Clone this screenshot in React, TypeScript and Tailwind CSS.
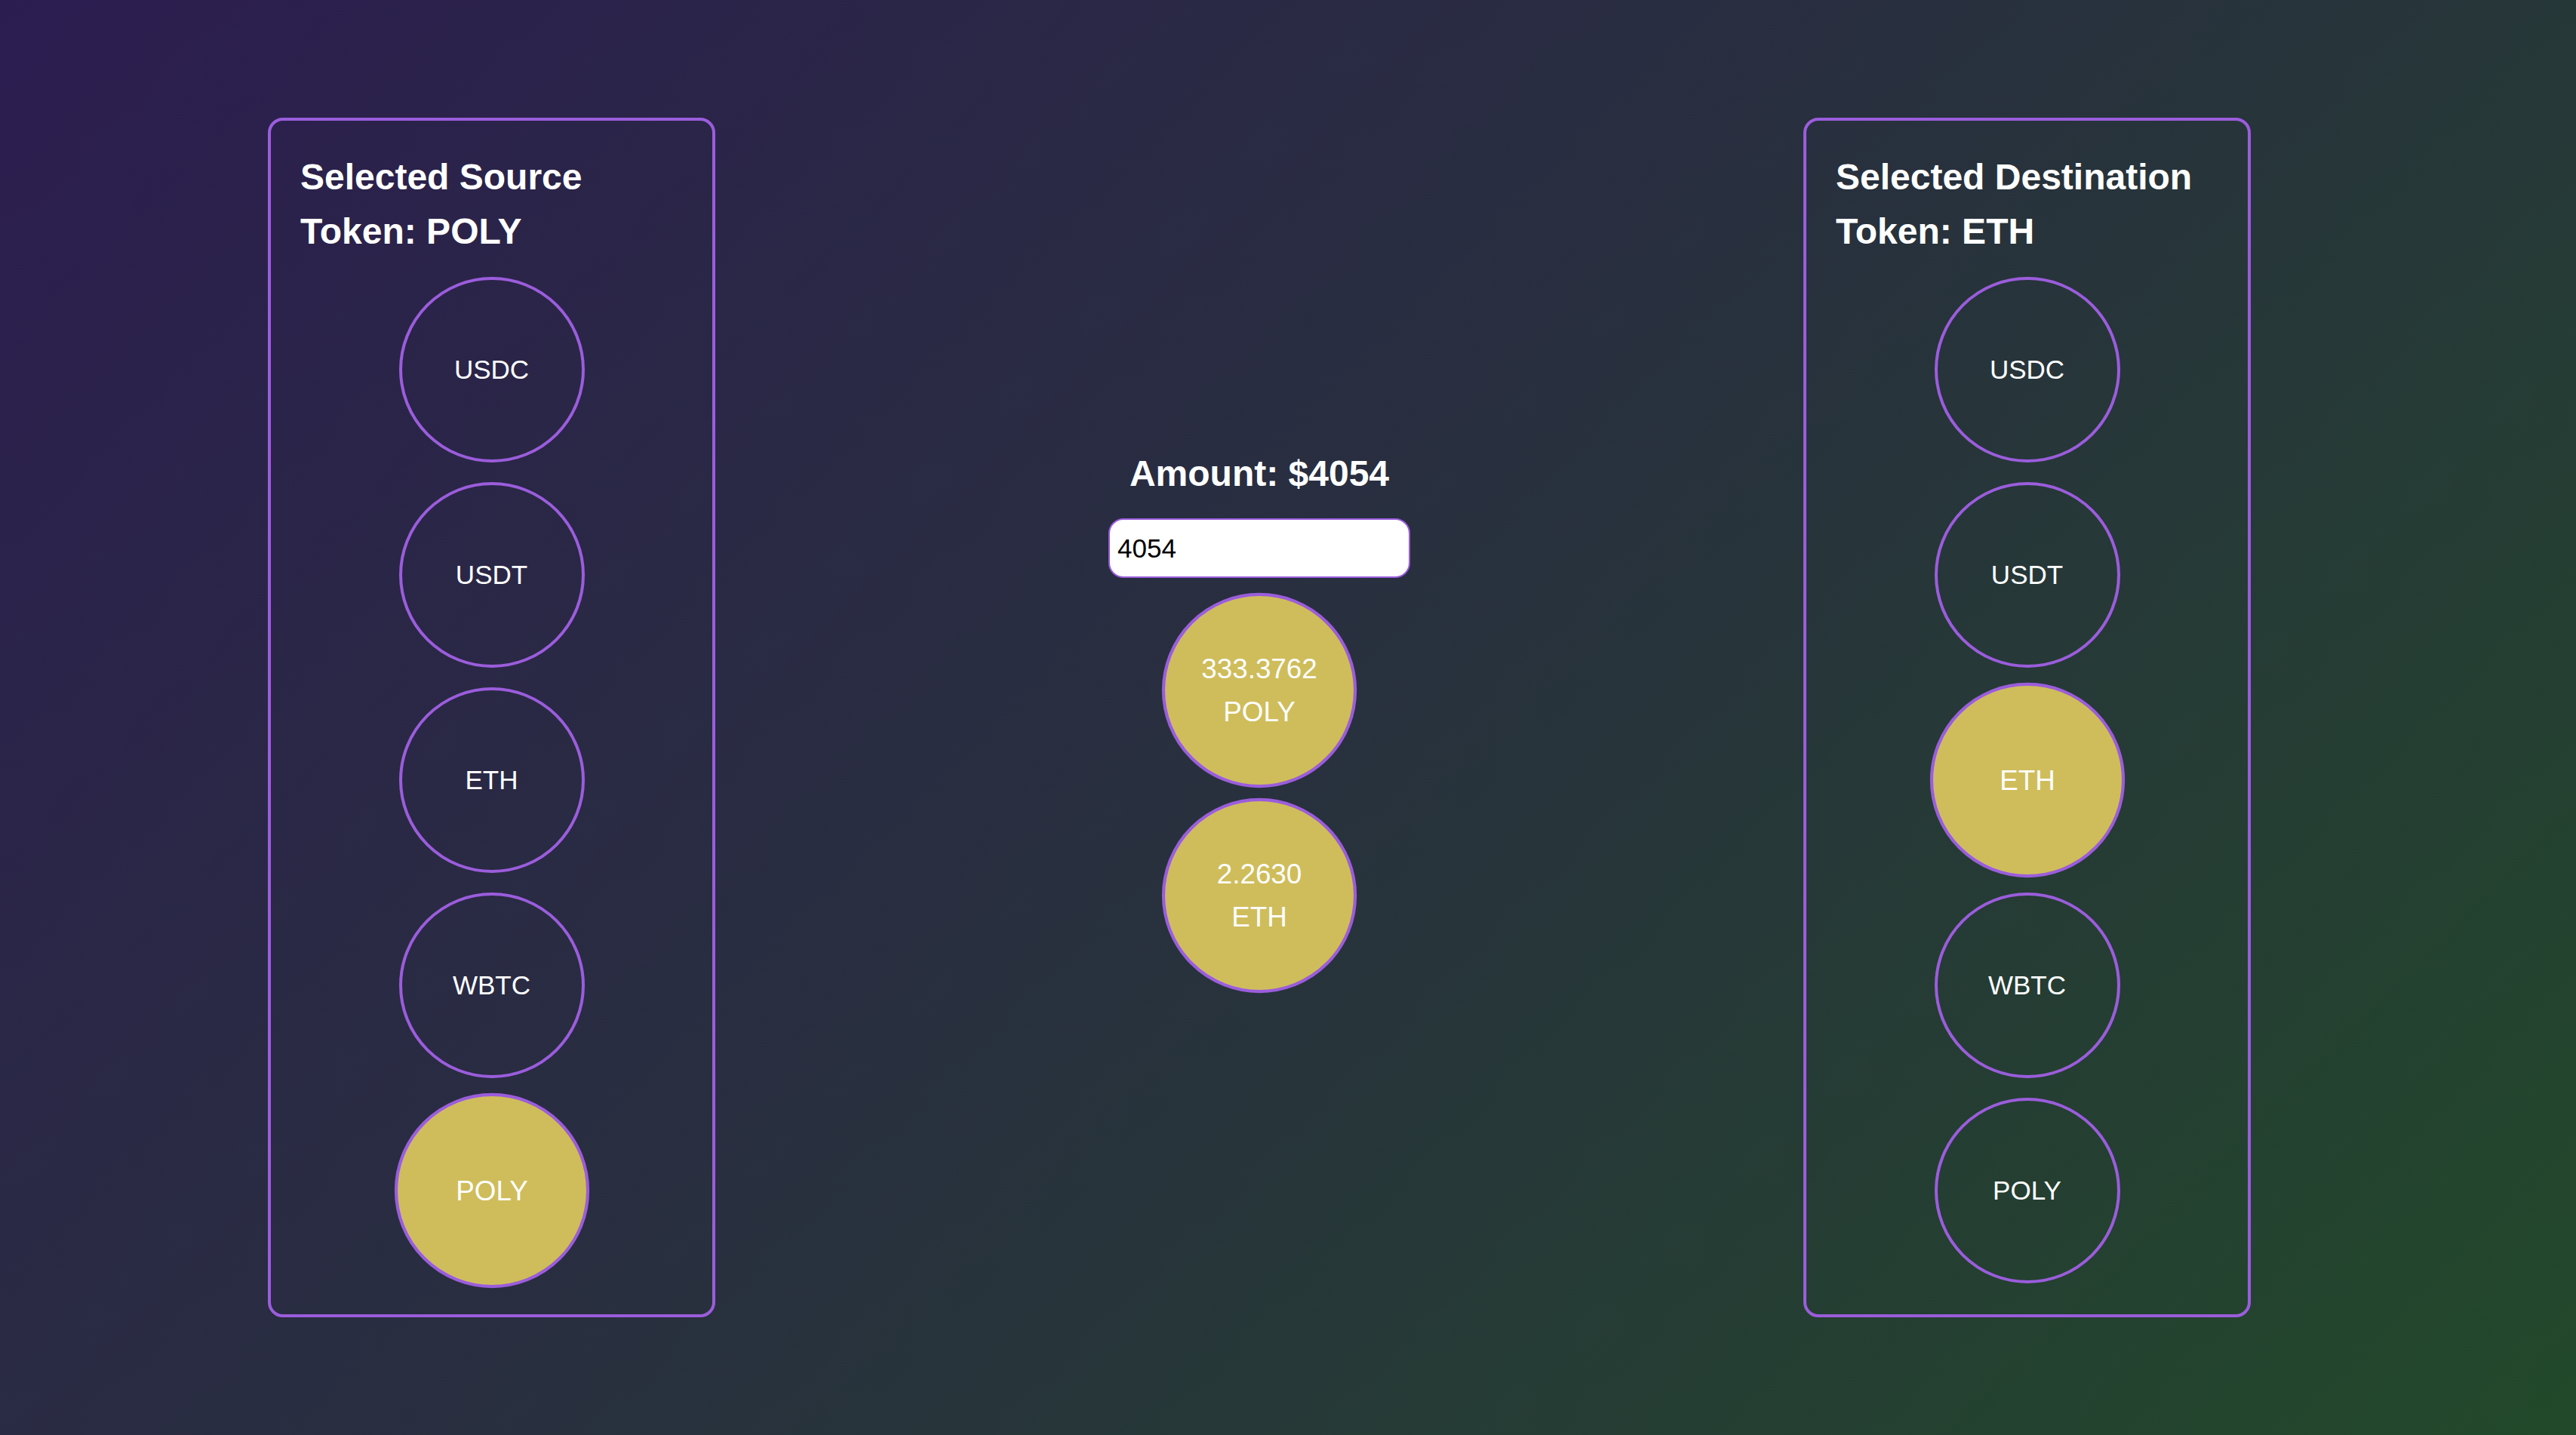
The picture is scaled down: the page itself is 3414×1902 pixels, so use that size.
import React from "react";

const tokens = ["USDC", "USDT", "ETH", "WBTC", "POLY"];

function TokenCircle({ label, selected }: { label: string; selected: boolean }) {
  return (
    <div
      className={
        "flex h-[246px] w-[246px] shrink-0 items-center justify-center rounded-full border-4 border-[#9b5ddc] text-[35px] leading-[54px] text-white " +
        (selected ? "scale-[1.05] bg-[#cfbd5c]" : "bg-transparent")
      }
    >
      {label}
    </div>
  );
}

function Panel({ title, selected }: { title: string; selected: string }) {
  return (
    <div className="flex w-[593px] shrink-0 flex-col items-center rounded-[20px] border-4 border-[#9b5ddc] px-[39px] pt-[39px] pb-[41px]">
      <h2 className="mb-[24px] w-full text-left text-[48px] font-bold leading-[72px] text-white">
        {title}
      </h2>
      <div className="flex flex-col items-center gap-[26px]">
        {tokens.map((t) => (
          <TokenCircle key={t} label={t} selected={t === selected} />
        ))}
      </div>
    </div>
  );
}

function ResultCircle({ amount, token }: { amount: string; token: string }) {
  return (
    <div className="flex h-[246px] w-[246px] shrink-0 scale-[1.05] flex-col items-center justify-center rounded-full border-4 border-[#9b5ddc] bg-[#cfbd5c] text-center text-[35px] leading-[54px] text-white">
      <div>{amount}</div>
      <div>{token}</div>
    </div>
  );
}

export default function App() {
  return (
    <div
      className="flex h-[1902px] w-full items-center bg-[linear-gradient(135deg,#2c1d50_0%,#28303e_50%,#22492a_100%)] pl-[355px]"
      style={{ fontFamily: '"Liberation Sans", Arial, Helvetica, sans-serif' }}
    >
      <div className="flex items-center gap-[521px]">
        <Panel title="Selected Source Token: POLY" selected="POLY" />
        <div className="flex w-[400px] shrink-0 flex-col items-center">
          <h2 className="mb-[23px] text-center text-[48px] font-bold leading-[72px] text-white">
            Amount: $4054
          </h2>
          <input
            type="text"
            defaultValue="4054"
            className="h-[79px] w-[400px] rounded-[20px] border-2 border-[#9b5ddc] bg-white px-[10px] text-[35px] text-black outline-none"
            style={{ fontFamily: '"Liberation Sans", Arial, sans-serif' }}
          />
          <div className="mt-[26px] flex flex-col items-center gap-[26px]">
            <ResultCircle amount="333.3762" token="POLY" />
            <ResultCircle amount="2.2630" token="ETH" />
          </div>
        </div>
        <Panel title="Selected Destination Token: ETH" selected="ETH" />
      </div>
    </div>
  );
}
